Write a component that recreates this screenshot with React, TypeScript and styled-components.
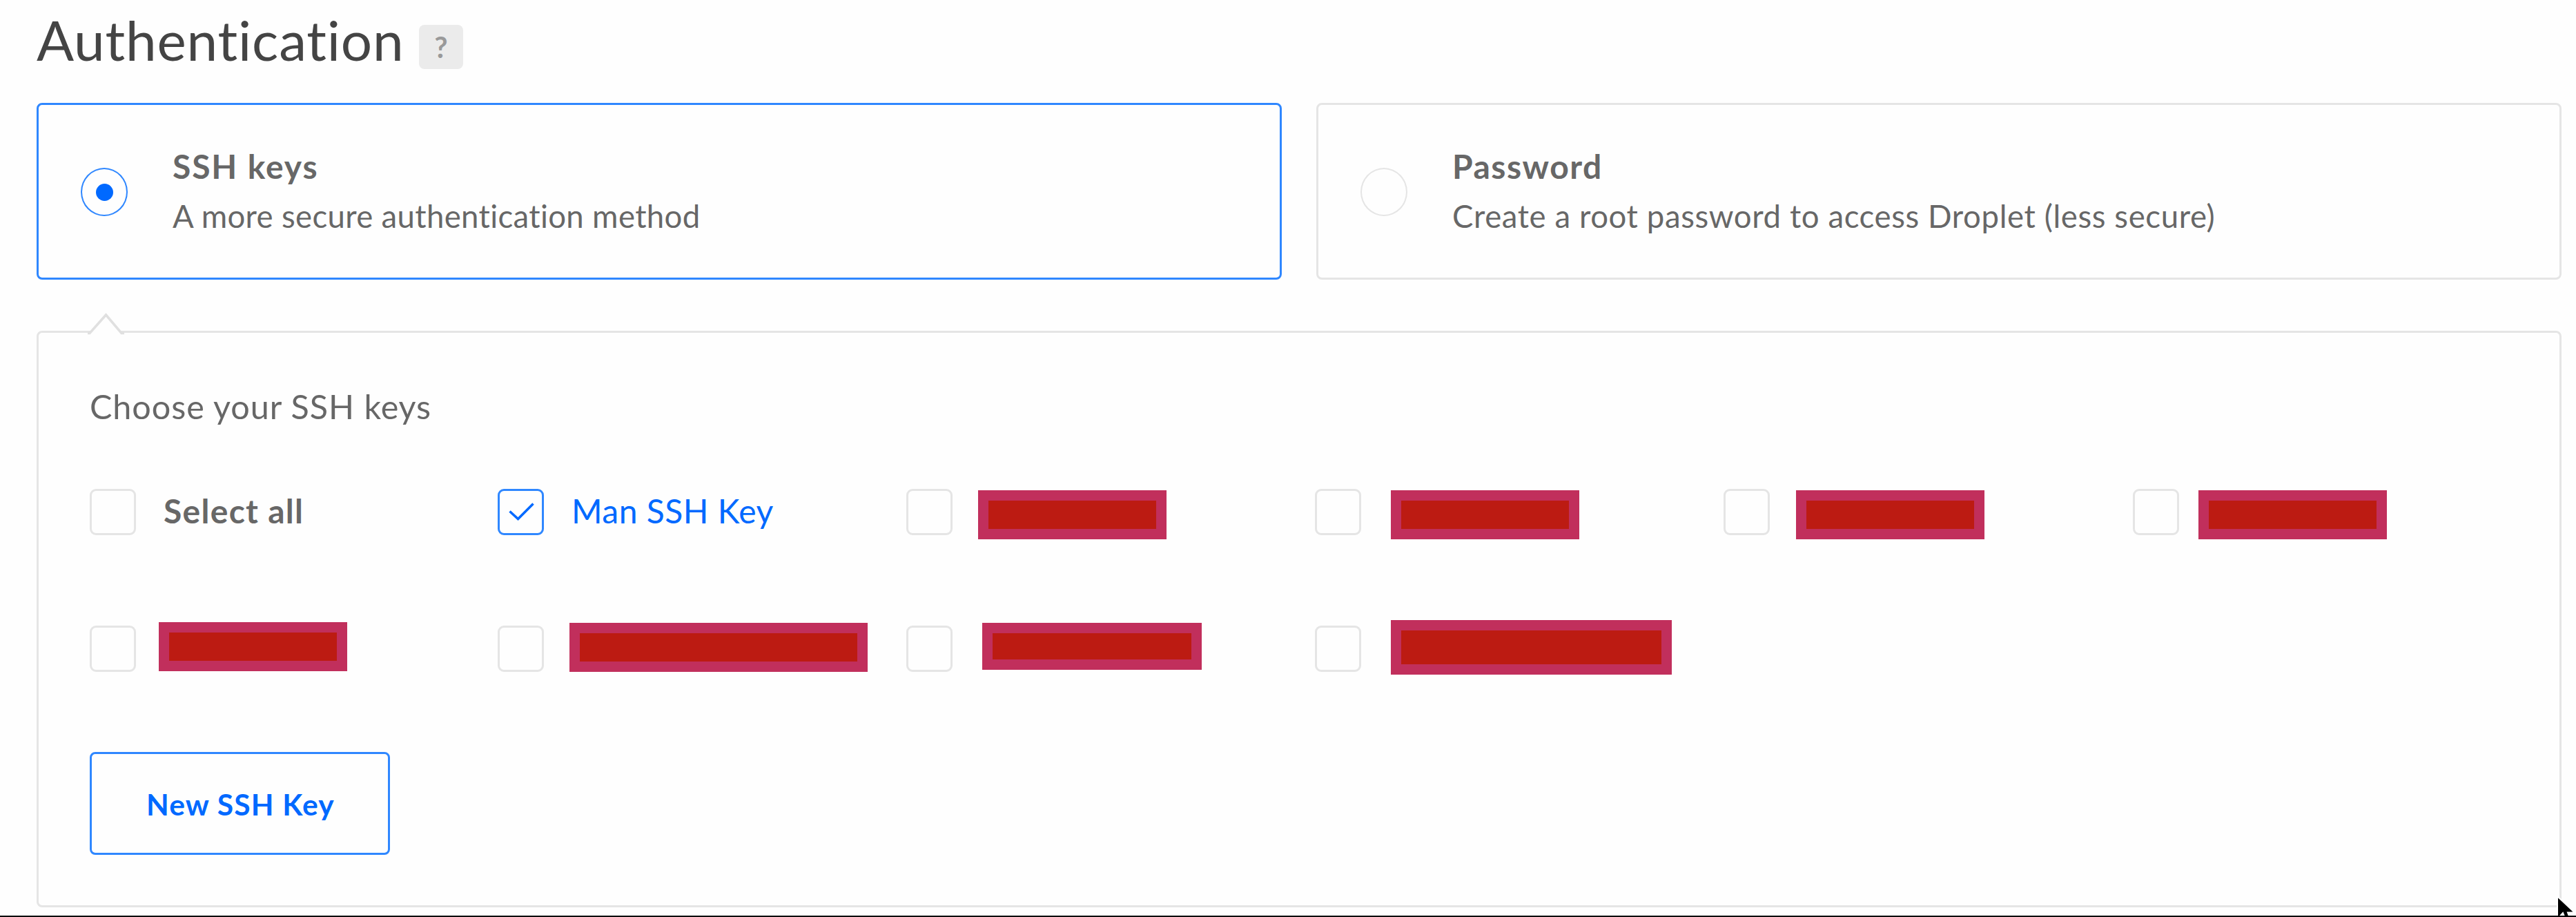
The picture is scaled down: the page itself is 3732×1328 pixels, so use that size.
import React from 'react';
import styled, { createGlobalStyle, css } from 'styled-components';

const BLUE = '#0069ff';
const BLUE_BORDER = '#2f87ff';
const BORDER = '#e5e5e5';
const TEXT = '#676767';

const GlobalStyle = createGlobalStyle`
  *, *::before, *::after { box-sizing: border-box; }
  body {
    margin: 0;
    background: #fefefe;
    color: ${TEXT};
    font-family: Lato, "Open Sans", sans-serif;
    font-variant-ligatures: none;
    overflow: hidden;
  }
`;

const Page = styled.main`
  position: relative;
  width: 3732px;
  height: 1328px;
  padding: 0 21px 0 53px;
  border-bottom: 2px solid #000;
  overflow: hidden;
`;

const Header = styled.header`
  display: flex;
  align-items: flex-start;
  height: 149px;
  padding-top: 9px;
`;

const Title = styled.h1`
  flex: none;
  width: 554px;
  margin: 0;
  color: #444;
  font-size: 80px;
  font-weight: 400;
  line-height: 97px;
  letter-spacing: 0.85px;
  white-space: nowrap;
`;

const HelpBadge = styled.button`
  width: 64px;
  height: 64px;
  margin: 27px 0 0;
  padding: 0;
  border: 0;
  border-radius: 8px;
  background: #ebebeb;
  color: #999;
  font: 700 42px/64px Lato, sans-serif;
  text-align: center;
`;

const Methods = styled.div`
  display: grid;
  grid-template-columns: 1804px 1804px;
  gap: 50px;
  height: 256px;
`;

const MethodCard = styled.label<{ $active?: boolean }>`
  display: flex;
  align-items: center;
  gap: 65px;
  padding-left: 61px;
  border: 3px solid ${p => (p.$active ? BLUE_BORDER : BORDER)};
  border-radius: 8px;
`;

const Radio = styled.span<{ $active?: boolean }>`
  display: flex;
  align-items: center;
  justify-content: center;
  width: 68px;
  height: 70px;
  margin-top: 2px;
  border: 2.5px solid ${p => (p.$active ? BLUE_BORDER : BORDER)};
  border-radius: 50%;
  ${p =>
    p.$active &&
    css`
      &::after {
        content: '';
        width: 25px;
        height: 25px;
        border-radius: 50%;
        background: ${BLUE};
      }
    `}
`;

const MethodText = styled.span`
  display: flex;
  flex-direction: column;
  line-height: 72px;
  white-space: nowrap;
`;

const MethodName = styled.strong<{ $spacing: number }>`
  font-size: 48px;
  font-weight: 700;
  letter-spacing: ${p => p.$spacing}px;
`;

const MethodHint = styled.span<{ $spacing: number }>`
  font-size: 45.5px;
  letter-spacing: ${p => p.$spacing}px;
`;

const Panel = styled.section`
  position: relative;
  height: 835px;
  margin-top: 74px;
  padding: 77px 0 0 74px;
  border: 3px solid ${BORDER};
  border-radius: 8px;
`;

const Caret = styled.svg`
  position: absolute;
  top: -30px;
  left: 67px;
`;

const PanelLabel = styled.h2`
  margin: 0 0 90px;
  font-size: 48.5px;
  font-weight: 400;
  line-height: 59px;
  letter-spacing: 0.95px;
`;

const KeyGrid = styled.div`
  display: grid;
  grid-template-columns: 591px 592px 592px 592px 593px 592px;
  grid-auto-rows: 67px;
  row-gap: 131px;
`;

const KeyItem = styled.label`
  display: flex;
  align-items: flex-start;
`;

const Checkbox = styled.span<{ $checked?: boolean }>`
  display: flex;
  flex: none;
  align-items: center;
  justify-content: center;
  width: 67px;
  height: 67px;
  border: 3px solid ${p => (p.$checked ? BLUE_BORDER : BORDER)};
  border-radius: 9px;
`;

const KeyName = styled.span<{ $strong?: boolean }>`
  margin-left: 40px;
  color: ${p => (p.$strong ? TEXT : BLUE)};
  font-size: 48px;
  font-weight: ${p => (p.$strong ? 700 : 400)};
  line-height: 63px;
  letter-spacing: ${p => (p.$strong ? 1.3 : 0.5)}px;
  white-space: nowrap;
`;

const Redaction = styled.span<{ $gap: number; $shift: number; $w: number; $h: number }>`
  flex: none;
  width: ${p => p.$w}px;
  height: ${p => p.$h}px;
  margin: ${p => p.$shift}px 0 0 ${p => p.$gap}px;
  border: 15px solid #c12f5c;
  background: #bc1b12;
`;

const NewKeyButton = styled.button`
  display: block;
  width: 435px;
  height: 149px;
  margin-top: 116px;
  padding: 2px 0 0 2px;
  border: 3px solid ${BLUE_BORDER};
  border-radius: 8px;
  background: transparent;
  color: ${BLUE};
  font: 700 42.5px/141px Lato, sans-serif;
  letter-spacing: 1.2px;
`;

const Pointer = styled.svg`
  position: absolute;
  top: 1295px;
  left: 3702px;
`;

const redactedKeys = [
  { gap: 37, shift: 2, w: 273, h: 71 },
  { gap: 43, shift: 2, w: 273, h: 71 },
  { gap: 38, shift: 2, w: 273, h: 71 },
  { gap: 28, shift: 2, w: 273, h: 71 },
  { gap: 33, shift: -5, w: 273, h: 71 },
  { gap: 37, shift: -4, w: 432, h: 71 },
  { gap: 43, shift: -4, w: 318, h: 68 },
  { gap: 43, shift: -8, w: 407, h: 79 },
];

export default function App() {
  return (
    <>
      <GlobalStyle />
      <Page>
        <Header>
          <Title>Authentication</Title>
          <HelpBadge>?</HelpBadge>
        </Header>
        <Methods>
          <MethodCard $active>
            <Radio $active />
            <MethodText>
              <MethodName $spacing={1.85}>SSH keys</MethodName>
              <MethodHint $spacing={0.36}>A more secure authentication method</MethodHint>
            </MethodText>
          </MethodCard>
          <MethodCard>
            <Radio />
            <MethodText>
              <MethodName $spacing={1.5}>Password</MethodName>
              <MethodHint $spacing={0.62}>Create a root password to access Droplet (less secure)</MethodHint>
            </MethodText>
          </MethodCard>
        </Methods>
        <Panel>
          <Caret width="62" height="36" viewBox="0 0 62 36">
            <path d="M6 31 30.500 2 55 31V36H6Z" fill="#fefefe" />
            <path d="M4 30.500H7L30.500 4 53 30.500H57" fill="none" stroke="#e0e0e0" strokeWidth="3.500" />
          </Caret>
          <PanelLabel>Choose your SSH keys</PanelLabel>
          <KeyGrid>
            <KeyItem>
              <Checkbox />
              <KeyName $strong>Select all</KeyName>
            </KeyItem>
            <KeyItem>
              <Checkbox $checked>
                <svg width="40" height="30" viewBox="0 0 40 30" fill="none" stroke={BLUE} strokeWidth="3.500">
                  <path d="M3.500 13.500 15.500 24.500 37.500 2.500" />
                </svg>
              </Checkbox>
              <KeyName>Man SSH Key</KeyName>
            </KeyItem>
            {redactedKeys.map((key, i) => (
              <KeyItem key={i}>
                <Checkbox />
                <Redaction $gap={key.gap} $shift={key.shift} $w={key.w} $h={key.h} />
              </KeyItem>
            ))}
          </KeyGrid>
          <NewKeyButton>New SSH Key</NewKeyButton>
        </Panel>
        <Pointer width="30" height="33" viewBox="0 0 30 33">
          <path
            d="M3 3 28 26.500H18L22 37H15L11 27 3 36Z"
            fill="#000"
            stroke="#fff"
            strokeWidth="2"
          />
        </Pointer>
      </Page>
    </>
  );
}
